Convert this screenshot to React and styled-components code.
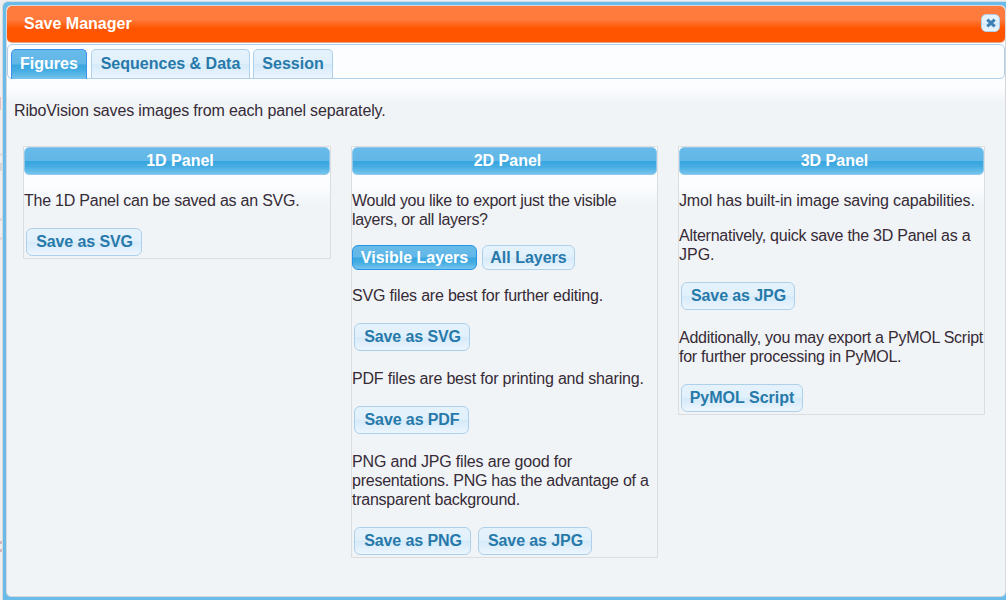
import React from 'react';
import styled, { createGlobalStyle, css } from 'styled-components';

const Global = createGlobalStyle`
  * { box-sizing: border-box; }
  html, body { margin: 0; padding: 0; overflow: hidden; }
  body {
    font: 16px/19px "Liberation Sans", Arial, sans-serif;
    color: #362b36;
    background: #f0eff0;
  }
`;

const blueGloss = css`
  background: linear-gradient(#68bbe9 0%, #61b7e7 49%, #37a5df 51%, #46ade2 72%, #77c4ec 100%);
`;
const paleGloss = css`
  background: linear-gradient(#e5f2fc 0%, #e0f0fb 49%, #d5eaf9 51%, #ecf5fd 100%);
`;

const Page = styled.div`
  display: flex;
  height: 600px;
  padding-top: 1px;
  overflow: hidden;
`;
const Backdrop = styled.div`
  flex: none;
  width: 2px;
  height: 599px;
  background:
    linear-gradient(#e6bfc0, #e6bfc0) 0 96px / 1px 13px no-repeat,
    linear-gradient(#e0dddf, #e0dddf) 0 152px / 2px 3px no-repeat,
    linear-gradient(#d9d6d8, #d9d6d8) 0 162px / 2px 8px no-repeat,
    linear-gradient(#e4d9dd, #e4d9dd) 0 217px / 2px 3px no-repeat,
    linear-gradient(#e4d9dd, #e4d9dd) 0 236px / 2px 3px no-repeat,
    linear-gradient(#d5b9bc, #d5b9bc) 0 540px / 2px 3px no-repeat,
    linear-gradient(#d5b9bc, #d5b9bc) 0 548px / 2px 3px no-repeat,
    #f0eff0;
`;
const Dialog = styled.section`
  flex: 1;
  display: flex;
  flex-direction: column;
  border-left: 1px solid #d3d9df;
  border-top: 1px solid #cfdce6;
  border-top-left-radius: 6px;
  background: #6bbbe8;
  padding: 3px 0 3px 3px;
`;
const DialogBody = styled.div`
  flex: 1;
  display: flex;
  flex-direction: column;
  border: 1px solid #d5d9dd;
  border-radius: 5px;
  overflow: hidden;
  background: linear-gradient(#fcfdff 0, #fcfdff 80px, #f0f4f7 98px);
`;
const TitleBar = styled.header`
  flex: none;
  height: 37px;
  margin-bottom: 1px;
  display: flex;
  align-items: center;
  justify-content: space-between;
  padding: 0 5px 2px 17px;
  border-bottom: 1px solid #e2a58a;
  border-radius: 5px;
  color: #fff;
  font-weight: bold;
  background: linear-gradient(#ff7b3e 0%, #ff7a3c 38%, #ff5500 62%, #ff5500 100%);
`;
const Close = styled.button`
  width: 19px;
  height: 18px;
  padding: 0;
  display: flex;
  align-items: center;
  justify-content: center;
  border: 1px solid #aed0ea;
  border-radius: 5px;
  ${paleGloss}
`;
const TabBar = styled.nav`
  flex: none;
  height: 35px;
  display: flex;
  align-items: flex-end;
  gap: 3px;
  padding-left: 3px;
  border: 1px solid #aed0ea;
  border-radius: 5px;
  background: #fcfdff;
`;
const Tab = styled.button`
  width: ${(p) => p.$width}px;
  height: ${(p) => (p.$active ? 30 : 29)}px;
  padding: 0 0 ${(p) => (p.$active ? 3 : 1)}px;
  margin: 0 ${(p) => (p.$active ? 1 : 0)}px ${(p) => (p.$active ? -1 : 0)}px 0;
  border: 1px solid #aed0ea;
  border-bottom: 0;
  border-radius: 5px 5px 0 0;
  font: bold 16px/19px "Liberation Sans", Arial, sans-serif;
  white-space: nowrap;
  color: #2779aa;
  ${paleGloss}
  ${(p) => p.$active && css`color: #fff; border-color: #3b91ee; ${blueGloss}`}
`;
const Content = styled.main`
  flex: 1;
  padding: 22px 20px 0 7px;
`;
const Intro = styled.p`
  margin: 0 0 26px;
  letter-spacing: -0.15px;
`;
const Columns = styled.div`
  display: grid;
  grid-template-columns: 308px 307px 307px;
  column-gap: 20px;
  align-items: start;
  margin-left: 9px;
`;
const Panel = styled.section`
  border: 1px solid #dddddd;
  background: linear-gradient(#fcfdff 0, #fcfdff 38px, #f0f4f7 60px);
`;
const PanelTitle = styled.h2`
  height: 28px;
  margin: 0;
  padding-left: 6px;
  border: 1px solid #8fc9ee;
  border-radius: 5px;
  color: #fff;
  font-size: 16px;
  line-height: 25px;
  text-align: center;
  ${blueGloss}
`;
const Text = styled.p`
  margin: 16px 0;
  white-space: nowrap;
`;
const Line = styled.span`
  display: block;
  letter-spacing: ${(p) => p.$track}px;
`;
const Actions = styled.div`
  display: flex;
  gap: 7px;
  padding: 2px;
`;
const Choices = styled.div`
  display: flex;
  gap: 5px;
`;
const Button = styled.button`
  width: ${(p) => p.$width}px;
  height: ${(p) => (p.$compact ? 25 : 28)}px;
  padding: 0 0 1px ${(p) => p.$inset || 0}px;
  border: 1px solid ${(p) => (p.$active ? '#2694e8' : '#aed0ea')};
  border-radius: 6px;
  font: bold 16px/19px "Liberation Sans", Arial, sans-serif;
  letter-spacing: ${(p) => (p.$inset ? -0.1 : 0)}px;
  white-space: nowrap;
  color: ${(p) => (p.$active ? '#fff' : '#2779aa')};
  ${(p) => (p.$active ? blueGloss : paleGloss)}
`;

export default function App() {
  return (
    <>
      <Global />
      <Page>
        <Backdrop />
        <Dialog>
          <DialogBody>
            <TitleBar>
              <span>Save Manager</span>
              <Close aria-label="Close">
                <svg width="10" height="10" viewBox="0 0 10 10">
                  <path d="M1.3 1.6 8.7 8.4M8.7 1.6 1.3 8.4" stroke="#3d80b3" strokeWidth="3" />
                </svg>
              </Close>
            </TitleBar>
            <TabBar>
              <Tab $active $width={76}>Figures</Tab>
              <Tab $width={159}>Sequences &amp; Data</Tab>
              <Tab $width={80}>Session</Tab>
            </TabBar>
            <Content>
              <Intro>RiboVision saves images from each panel separately.</Intro>
              <Columns>
                <Panel>
                  <PanelTitle>1D Panel</PanelTitle>
                  <Text><Line $track={-0.23}>The 1D Panel can be saved as an SVG.</Line></Text>
                  <Actions><Button $inset={1} $width={116}>Save as SVG</Button></Actions>
                </Panel>
                <Panel>
                  <PanelTitle>2D Panel</PanelTitle>
                  <Text>
                    <Line $track={-0.27}>Would you like to export just the visible</Line>
                    <Line $track={-0.3}>layers, or all layers?</Line>
                  </Text>
                  <Choices>
                    <Button $compact $active $width={125}>Visible Layers</Button>
                    <Button $compact $width={93}>All Layers</Button>
                  </Choices>
                  <Text><Line $track={-0.2}>SVG files are best for further editing.</Line></Text>
                  <Actions><Button $inset={1} $width={116}>Save as SVG</Button></Actions>
                  <Text><Line $track={-0.18}>PDF files are best for printing and sharing.</Line></Text>
                  <Actions><Button $inset={1} $width={115}>Save as PDF</Button></Actions>
                  <Text>
                    <Line $track={-0.17}>PNG and JPG files are good for</Line>
                    <Line $track={-0.25}>presentations. PNG has the advantage of a</Line>
                    <Line $track={-0.24}>transparent background.</Line>
                  </Text>
                  <Actions>
                    <Button $inset={1} $width={117}>Save as PNG</Button>
                    <Button $inset={1} $width={114}>Save as JPG</Button>
                  </Actions>
                </Panel>
                <Panel>
                  <PanelTitle>3D Panel</PanelTitle>
                  <Text><Line $track={-0.15}>Jmol has built-in image saving capabilities.</Line></Text>
                  <Text>
                    <Line $track={-0.25}>Alternatively, quick save the 3D Panel as a</Line>
                    <Line $track={0}>JPG.</Line>
                  </Text>
                  <Actions><Button $inset={1} $width={114}>Save as JPG</Button></Actions>
                  <Text>
                    <Line $track={-0.25}>Additionally, you may export a PyMOL Script</Line>
                    <Line $track={-0.25}>for further processing in PyMOL.</Line>
                  </Text>
                  <Actions><Button $width={122}>PyMOL Script</Button></Actions>
                </Panel>
              </Columns>
            </Content>
          </DialogBody>
        </Dialog>
      </Page>
    </>
  );
}
